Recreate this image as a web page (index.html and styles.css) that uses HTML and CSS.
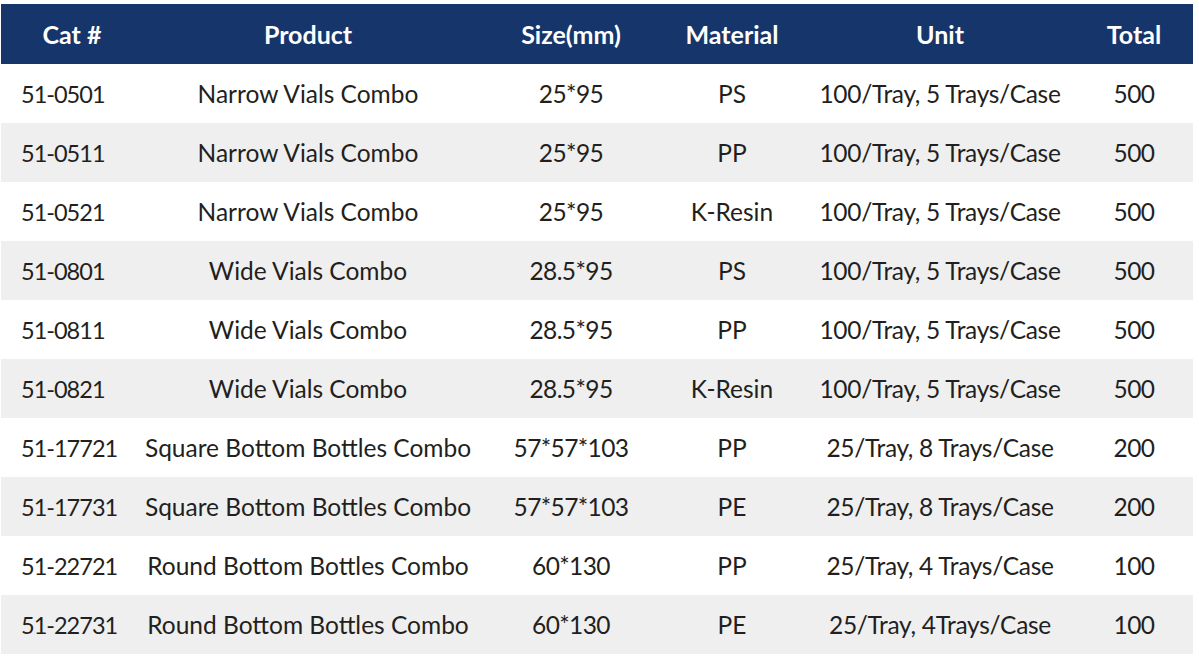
FILE: index.html
```html
<!DOCTYPE html>
<html>
<head>
<meta charset="utf-8">
<link rel="stylesheet" href="styles.css">
</head>
<body>
<table class="spec">
  <colgroup>
    <col class="c1"><col class="c2"><col class="c3"><col class="c4"><col class="c5"><col class="c6">
  </colgroup>
  <thead>
    <tr><th class="cat">Cat #</th><th>Product</th><th>Size(mm)</th><th>Material</th><th>Unit</th><th>Total</th></tr>
  </thead>
  <tbody>
    <tr><td class="cat">51-0501</td><td>Narrow Vials Combo</td><td class="num">25*95</td><td>PS</td><td class="unit">100/Tray, 5 Trays/Case</td><td class="num">500</td></tr>
    <tr><td class="cat">51-0511</td><td>Narrow Vials Combo</td><td class="num">25*95</td><td>PP</td><td class="unit">100/Tray, 5 Trays/Case</td><td class="num">500</td></tr>
    <tr><td class="cat">51-0521</td><td>Narrow Vials Combo</td><td class="num">25*95</td><td>K-Resin</td><td class="unit">100/Tray, 5 Trays/Case</td><td class="num">500</td></tr>
    <tr><td class="cat">51-0801</td><td>Wide Vials Combo</td><td class="num">28.5*95</td><td>PS</td><td class="unit">100/Tray, 5 Trays/Case</td><td class="num">500</td></tr>
    <tr><td class="cat">51-0811</td><td>Wide Vials Combo</td><td class="num">28.5*95</td><td>PP</td><td class="unit">100/Tray, 5 Trays/Case</td><td class="num">500</td></tr>
    <tr><td class="cat">51-0821</td><td>Wide Vials Combo</td><td class="num">28.5*95</td><td>K-Resin</td><td class="unit">100/Tray, 5 Trays/Case</td><td class="num">500</td></tr>
    <tr><td class="cat">51-17721</td><td>Square Bottom Bottles Combo</td><td class="num">57*57*103</td><td>PP</td><td class="unit">25/Tray, 8 Trays/Case</td><td class="num">200</td></tr>
    <tr><td class="cat">51-17731</td><td>Square Bottom Bottles Combo</td><td class="num">57*57*103</td><td>PE</td><td class="unit">25/Tray, 8 Trays/Case</td><td class="num">200</td></tr>
    <tr><td class="cat">51-22721</td><td>Round Bottom Bottles Combo</td><td class="num">60*130</td><td>PP</td><td class="unit">25/Tray, 4 Trays/Case</td><td class="num">100</td></tr>
    <tr><td class="cat">51-22731</td><td>Round Bottom Bottles Combo</td><td class="num">60*130</td><td>PE</td><td class="unit">25/Tray, 4Trays/Case</td><td class="num">100</td></tr>
  </tbody>
</table>
</body>
</html>
```

FILE: styles.css
```css
html, body {
  margin: 0;
  padding: 0;
  background: #ffffff;
}
body {
  padding: 4px 0 0 1px;
  font-family: Lato, "Liberation Sans", sans-serif;
  color: #231f20;
}
.spec {
  border-collapse: collapse;
  table-layout: fixed;
  width: 1192px;
}
.c1 { width: 132px; }
.c2 { width: 350px; }
.c3 { width: 176px; }
.c4 { width: 146px; }
.c5 { width: 270px; }
.c6 { width: 118px; }
.spec th {
  background: #16366b;
  color: #ffffff;
  font-weight: 700;
  font-size: 25px;
  height: 60px;
  padding: 0;
  text-align: center;
  white-space: nowrap;
}
.spec th.cat {
  padding-left: 10px;
}
.spec td {
  font-size: 24.5px;
  height: 59px;
  padding: 0;
  text-align: center;
  white-space: nowrap;
}
.spec td.cat {
  text-align: left;
  padding-left: 20px;
  font-size: 23.5px;
  letter-spacing: -1px;
}
.spec td.num {
  letter-spacing: -0.6px;
}
.spec td.unit {
  letter-spacing: -0.3px;
}
.spec tbody tr:nth-child(even) td {
  background: #efefef;
}
```
